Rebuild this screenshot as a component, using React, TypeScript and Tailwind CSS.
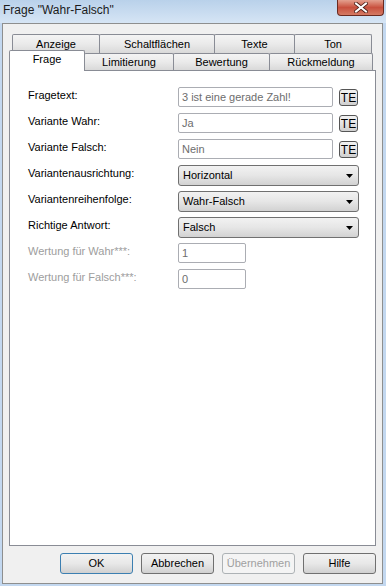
import React from 'react';

const font = { fontFamily: '"Liberation Sans", Arial, sans-serif' };

const TabTop = ({ label, w }: { label: string; w: number }) => (
  <div
    className="h-[19px] -ml-px first:ml-0 flex justify-center pt-[3px] text-[11px] leading-[13px] text-black border border-b-0 border-[#898c95] rounded-t-[2px] bg-gradient-to-b from-[#f4f4f4] via-[#eaeaea] to-[#d9d9d9]"
    style={{ width: w }}
  >
    {label}
  </div>
);

const TabRow2 = ({ label, w }: { label: string; w: number }) => (
  <div
    className="h-[17px] -ml-px flex justify-center pt-[2px] text-[11px] leading-[13px] text-black border border-b-0 border-[#898c95] rounded-t-[2px] bg-gradient-to-b from-[#f4f4f4] via-[#eaeaea] to-[#d9d9d9]"
    style={{ width: w }}
  >
    {label}
  </div>
);

const Label = ({ text, disabled }: { text: string; disabled?: boolean }) => (
  <div className={`w-[150px] pt-[2px] text-[11px] leading-[13px] ${disabled ? 'text-[#9d9d9d]' : 'text-black'}`}>
    {text}
  </div>
);

const TextBox = ({ value, w }: { value: string; w: number }) => (
  <div
    className="h-[20px] border border-[#abadb3] rounded-[2px] bg-white pl-[3px] flex items-center text-[11px] text-[#6d6d6d]"
    style={{ width: w }}
  >
    {value}
  </div>
);

const TeButton = () => (
  <div className="ml-[6px] mt-[2px] w-[19px] h-[17px] border border-[#555] rounded-[3px] bg-gradient-to-b from-[#f2f2f2] via-[#e4e4e4] to-[#cfcfcf] flex items-center justify-center text-[12px] leading-none text-black">
    TE
  </div>
);

const Combo = ({ value }: { value: string }) => (
  <div className="w-[181px] h-[21px] border border-[#707070] rounded-[3px] bg-gradient-to-b from-[#f2f2f2] via-[#e6e6e6] to-[#d2d2d2] flex items-center pl-[4px] pr-[5px] text-[11px] text-black">
    <span className="flex-1">{value}</span>
    <svg width="7" height="4" viewBox="0 0 7 4">
      <path d="M0 0 H7 L3.5 4 Z" fill="#000" />
    </svg>
  </div>
);

const Button = ({ label, variant }: { label: string; variant?: 'default' | 'disabled' }) => {
  const cls =
    variant === 'default'
      ? 'border-[#3c7fb1] text-black'
      : variant === 'disabled'
      ? 'border-[#adb2b5] text-[#a0a0a0] from-[#f4f4f4] via-[#f4f4f4] to-[#f4f4f4]'
      : 'border-[#707070] text-black';
  return (
    <div
      className={`w-[73px] h-[21px] border rounded-[3px] flex items-center justify-center text-[11px] bg-gradient-to-b from-[#f2f2f2] via-[#e8e8e8] to-[#d0d0d0] ${cls}`}
    >
      {label}
    </div>
  );
};

export default function App() {
  return (
    <div className="w-[386px] h-[586px] bg-[#c3d8f0] flex flex-col overflow-hidden" style={font}>
      {/* title bar */}
      <div className="relative h-[23px] bg-gradient-to-b from-[#b9d1ea] to-[#d6e5f5] flex items-start">
        <span className="pl-[3px] pt-[3px] text-[12px] leading-[14px] text-[#1b1b1b]">Frage "Wahr-Falsch"</span>
        <div className="absolute right-[2px] top-0 w-[47px] h-[16px] rounded-b-[4px] border border-t-0 border-[#6b2a20] bg-gradient-to-b from-[#e3a08f] via-[#c8503e] to-[#d47a64] flex items-center justify-center">
          <svg width="14" height="11" viewBox="0 0 14 11">
            <path d="M2 1.5 L12 9.5 M12 1.5 L2 9.5" stroke="#4a1d16" strokeWidth="3.6" strokeLinecap="square" />
            <path d="M2 1.5 L12 9.5 M12 1.5 L2 9.5" stroke="#ffffff" strokeWidth="2" strokeLinecap="square" />
          </svg>
        </div>
      </div>

      {/* client area */}
      <div className="ml-[2px] w-[381px] h-[561px] border border-[#8e8f8f] bg-[#f0f0f0] flex flex-col px-[6px] pt-[10px]">
        {/* tab headers */}
        <div className="h-[36px] flex flex-col">
          <div className="flex h-[19px] pl-[3px]">
            <TabTop label="Anzeige" w={88} />
            <TabTop label="Schaltflächen" w={116} />
            <TabTop label="Texte" w={81} />
            <TabTop label="Ton" w={78} />
          </div>
          <div className="flex h-[17px] items-end">
            <div className="relative z-10 w-[76px] h-[21px] -mb-px flex justify-center pt-[2px] text-[11px] leading-[13px] text-black border border-b-0 border-[#898c95] rounded-t-[2px] bg-white">
              Frage
            </div>
            <TabRow2 label="Limitierung" w={90} />
            <TabRow2 label="Bewertung" w={97} />
            <TabRow2 label="Rückmeldung" w={104} />
          </div>
        </div>

        {/* panel */}
        <div className="w-[367px] h-[476px] border border-[#898c95] bg-white pl-[18px] pt-[16px] flex flex-col gap-[6px]">
          <div className="flex items-start h-[20px]">
            <Label text="Fragetext:" />
            <TextBox value="3 ist eine gerade Zahl!" w={155} />
            <TeButton />
          </div>
          <div className="flex items-start h-[20px]">
            <Label text="Variante Wahr:" />
            <TextBox value="Ja" w={155} />
            <TeButton />
          </div>
          <div className="flex items-start h-[20px]">
            <Label text="Variante Falsch:" />
            <TextBox value="Nein" w={155} />
            <TeButton />
          </div>
          <div className="flex items-start h-[20px]">
            <Label text="Variantenausrichtung:" />
            <Combo value="Horizontal" />
          </div>
          <div className="flex items-start h-[20px]">
            <Label text="Variantenreihenfolge:" />
            <Combo value="Wahr-Falsch" />
          </div>
          <div className="flex items-start h-[20px]">
            <Label text="Richtige Antwort:" />
            <Combo value="Falsch" />
          </div>
          <div className="flex items-start h-[20px]">
            <Label text="Wertung für Wahr***:" disabled />
            <TextBox value="1" w={68} />
          </div>
          <div className="flex items-start h-[20px]">
            <Label text="Wertung für Falsch***:" disabled />
            <TextBox value="0" w={68} />
          </div>
        </div>

        {/* dialog buttons */}
        <div className="mt-[7px] flex justify-end gap-[8px]">
          <Button label="OK" variant="default" />
          <Button label="Abbrechen" />
          <Button label="Übernehmen" variant="disabled" />
          <Button label="Hilfe" />
        </div>
      </div>
    </div>
  );
}
